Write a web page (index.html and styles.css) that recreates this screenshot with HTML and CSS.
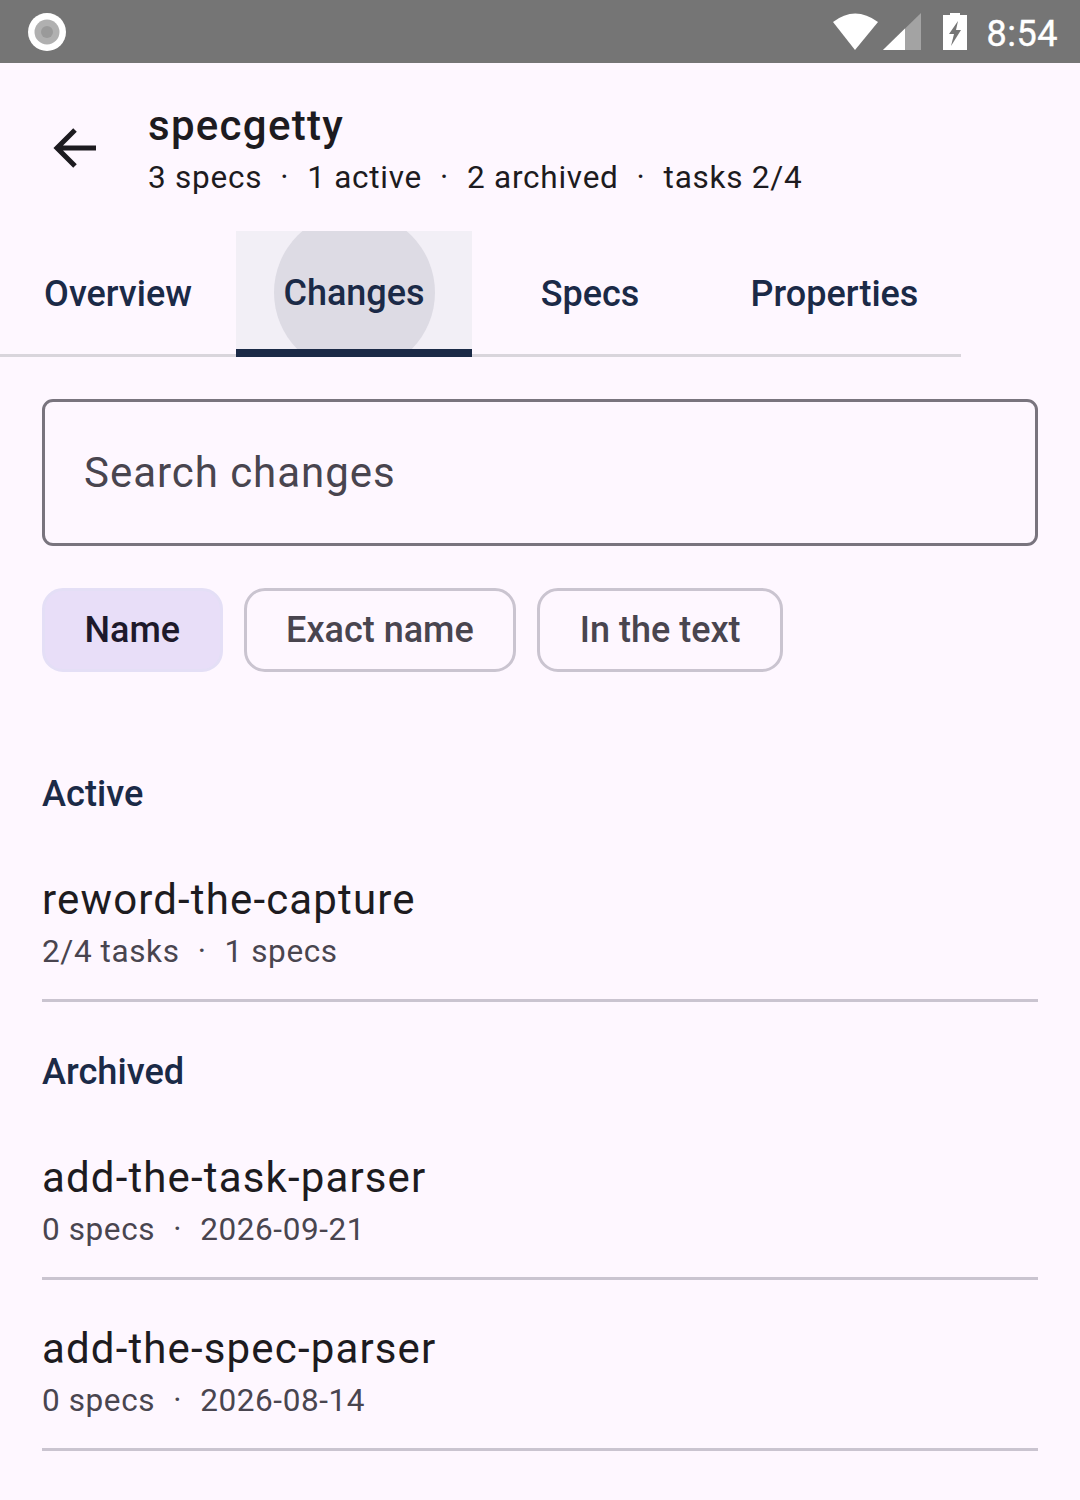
FILE: index.html
```html
<!DOCTYPE html>
<html lang="en">
<head>
    <meta charset="UTF-8">
    <title>specgetty</title>
    <meta name="viewport" content="width=device-width, initial-scale=1.0">
    <link rel="stylesheet" href="styles.css">
</head>
<body>
    <div class="statusbar">
        <svg class="dot" width="38" height="38" viewBox="0 0 38 38">
            <circle cx="19" cy="19" r="19" fill="#fff"/>
            <circle cx="19" cy="19" r="12.500" fill="#b0b0b0"/>
            <circle cx="19" cy="19" r="6" fill="#9a9a9a"/>
        </svg>
        <div class="status-right">
            <svg width="46" height="38" viewBox="0 0 46 38"><path d="M1 9 Q23 -8 46 9 L23 37 Z" fill="#fff"/></svg>
            <svg class="signal" width="38" height="38" viewBox="0 0 38 38">
                <path d="M0 37 L38 0 V37 Z" fill="#a3a3a3"/>
                <path d="M0 37 L22 15.500 V37 Z" fill="#fff"/>
            </svg>
            <svg class="battery" width="24" height="38" viewBox="0 0 24 38">
                <path fill-rule="evenodd" d="M7 0 H17 V2 H24 V37 H0 V2 H7 Z M15 8 L6 21 H11 L8 33 L18 17 H13 Z" fill="#fff"/>
            </svg>
            <span class="clock">8:54</span>
        </div>
    </div>

    <div class="topbar">
        <svg class="back" width="44" height="42" viewBox="0 0 44 42">
            <path d="M43 21 H4 M22 3 L4 21 L22 39" fill="none" stroke="#1d1b20" stroke-width="5"/>
        </svg>
        <div class="topbar-text">
            <div class="title">specgetty</div>
            <div class="subtitle">3 specs<i>·</i>1 active<i>·</i>2 archived<i>·</i>tasks 2/4</div>
        </div>
    </div>

    <div class="tabs">
        <div class="tab">Overview</div>
        <div class="tab active"><span class="ripple"></span><span class="tab-label">Changes</span></div>
        <div class="tab">Specs</div>
        <div class="tab tab-wide">Properties</div>
    </div>

    <div class="content">
        <div class="search">Search changes</div>
        <div class="chips">
            <div class="chip selected">Name</div>
            <div class="chip">Exact name</div>
            <div class="chip">In the text</div>
        </div>

        <h3 class="section first">Active</h3>
        <div class="item">
            <div class="item-name">reword-the-capture</div>
            <div class="item-meta">2/4 tasks<i>·</i>1 specs</div>
        </div>

        <h3 class="section">Archived</h3>
        <div class="item">
            <div class="item-name">add-the-task-parser</div>
            <div class="item-meta">0 specs<i>·</i>2026-09-21</div>
        </div>
        <div class="item">
            <div class="item-name">add-the-spec-parser</div>
            <div class="item-meta">0 specs<i>·</i>2026-08-14</div>
        </div>
    </div>
</body>
</html>
```

FILE: styles.css
```css
html, body { height: 100%; }
body { margin: 0; background: #fef7ff; color: #1d1b20; font-family: Roboto, sans-serif; overflow: hidden; }
i { font-style: normal; display: inline-block; width: 45px; text-align: center; }

.statusbar { height: 63px; background: #757575; display: flex; align-items: center; justify-content: space-between; padding: 0 22px 0 28px; }
.dot { display: block; }
.status-right { display: flex; align-items: center; }
.signal { margin-left: 5px; }
.battery { margin-left: 22px; }
.clock { margin-left: 20px; padding-top: 4px; color: #fff; font-size: 36px; line-height: 42px; letter-spacing: 0.5px; -webkit-text-stroke: 0.4px #fff; }

.topbar { height: 168px; display: flex; align-items: center; padding-left: 53px; box-sizing: border-box; }
.back { margin: 2px 51px 0 0; flex: none; }
.topbar-text { padding-top: 9px; }
.title { font-size: 42px; line-height: 50px; font-weight: 500; letter-spacing: 1.300px; margin-bottom: 2px; }
.subtitle { font-size: 31.500px; line-height: 50px; letter-spacing: 0.750px; }

.tabs { width: 961px; height: 126px; display: flex; border-bottom: 3px solid #d9d5dc; box-sizing: border-box; }
.tab { width: 236px; height: 126px; flex: none; box-sizing: border-box; display: flex; align-items: center; justify-content: center; font-size: 36px; font-weight: 500; color: #1b2a47; }
.tab-wide { width: 253px; }
.tab.active { position: relative; overflow: hidden; background: #f2eff6; border-bottom: 8px solid #1b2a47; padding-top: 6px; }
.ripple { position: absolute; left: 38px; top: -19px; width: 161px; height: 161px; border-radius: 50%; background: #dddbe4; }
.tab-label { position: relative; }

.content { padding: 42px 42px 0; }
.search { height: 147px; box-sizing: border-box; border: 3px solid #79747e; border-radius: 11px; display: flex; align-items: center; padding-left: 39px; font-size: 42px; letter-spacing: 0.960px; color: #49454f; }
.chips { display: flex; gap: 21px; margin-top: 42px; }
.chip { height: 84px; box-sizing: border-box; border: 3px solid #cac4d0; border-radius: 21px; padding: 0 39.500px; display: flex; align-items: center; font-size: 36px; font-weight: 500; color: #49454f; }
.chip.selected { background: #e8def8; border-color: #e4dff6; color: #1d192b; }

.section { margin: 0; height: 150px; padding-top: 48px; box-sizing: border-box; font-size: 36.200px; line-height: 44px; font-weight: 500; color: #1b2a47; }
.section.first { margin-top: 64px; height: 138px; padding-top: 36px; }
.item { height: 128px; box-sizing: border-box; border-bottom: 3px solid #cac4d0; }
.item + .item { height: 171px; padding-top: 43px; }
.item-name { font-size: 42px; line-height: 52px; letter-spacing: 1.150px; }
.item-meta { font-size: 31.500px; line-height: 50px; padding-top: 1px; letter-spacing: 0.600px; color: #49454f; }
```
